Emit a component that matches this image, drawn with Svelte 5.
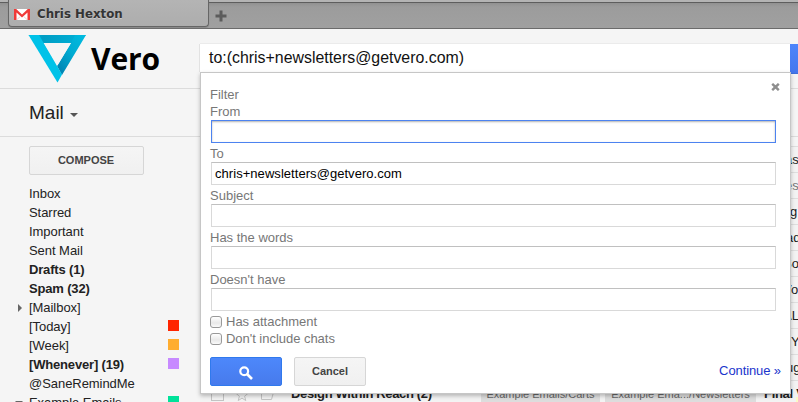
<script>
  const folders = [
    { name: 'Inbox' },
    { name: 'Starred' },
    { name: 'Important' },
    { name: 'Sent Mail' },
    { name: 'Drafts (1)', bold: true },
    { name: 'Spam (32)', bold: true },
    { name: '[Mailbox]', arrow: 'right' },
    { name: '[Today]', color: '#ff2500' },
    { name: '[Week]', color: '#ffad2f' },
    { name: '[Whenever] (19)', bold: true, color: '#c78aff' },
    { name: '@SaneRemindMe' },
    { name: 'Example Emails', arrow: 'down', color: '#00e29a' }
  ];
  const fields = [
    { label: 'From', value: '', focus: true },
    { label: 'To', value: 'chris+newsletters@getvero.com' },
    { label: 'Subject', value: '' },
    { label: 'Has the words', value: '' },
    { label: "Doesn't have", value: '' }
  ];
  const checks = ['Has attachment', "Don't include chats"];
  const snippets = [
    { text: 'as', x: 585 },
    { text: 'es', x: 585, read: true },
    { text: 'g', x: 590 },
    { text: 'ad', x: 586 },
    { text: 'So', x: 583 },
    { text: 'Vo', x: 583 },
    { text: 'AL', x: 583 },
    { text: 'Y', x: 591 },
    { text: 'ug', x: 586 }
  ];
</script>

<div class="window">
  <div class="tabbar">
    <div class="tab">
      <svg width="16" height="11" viewBox="0 0 16 11">
        <rect width="16" height="11" fill="#fff" />
        <path d="M0 11V0h2.200L8 5.600 13.800 0H16v11h-2.500V3.600L8 8.600 2.500 3.600V11z" fill="#f03a38" />
        <path d="M3 10.500 6.300 7.500M13 10.500 9.700 7.500" stroke="#e9b9b6" stroke-width=".7" />
      </svg>
      <span>Chris Hexton</span>
    </div>
    <svg class="plus" width="12" height="12" viewBox="0 0 12 12">
      <path d="M4.500.5h3v4h4v3h-4v4h-3v-4h-4v-3h4z" fill="#5c5c5c" />
    </svg>
  </div>

  <header>
    <svg class="logo" width="58" height="48" viewBox="0 0 58 48">
      <defs>
        <linearGradient id="topBand" x1="0" x2="1">
          <stop offset="0" stop-color="#00b9dc" />
          <stop offset=".25" stop-color="#009dc4" />
          <stop offset="1" stop-color="#00b2d8" />
        </linearGradient>
        <linearGradient id="rightBand" x1="1" y1="0" x2=".1" y2="1">
          <stop offset="0" stop-color="#00bce1" />
          <stop offset=".5" stop-color="#00abd2" />
          <stop offset="1" stop-color="#0080b0" />
        </linearGradient>
      </defs>
      <path d="M.5 0H58l-9 8H15z" fill="url(#topBand)" />
      <path d="M58 0 34 40l-5-9L43 8l4-8z" fill="url(#rightBand)" />
      <path d="M.5 0h10.500l23 39.500L29.500 47.500z" fill="#00c2e8" />
      <path d="M16 8h27L29.500 30.500z" fill="#f5f5f5" />
    </svg>
    <span class="brand">Vero</span>
  </header>

  <div class="toolbar"><span>Mail</span><i></i></div>

  <div class="body">
    <nav>
      <button class="compose">COMPOSE</button>
      <ul>
        {#each folders as f}
          <li class:bold={f.bold}>
            <span class="arrow {f.arrow ?? ''}"></span>
            <span class="name">{f.name}</span>
            {#if f.color}<b class="swatch" style="background:{f.color}"></b>{/if}
          </li>
        {/each}
      </ul>
    </nav>
    <div class="list">
      {#each snippets as s}
        <div class="row" class:read={s.read} style="padding-left:{s.x}px">{s.text}</div>
      {/each}
      <div class="row last">
        <span class="box"></span>
        <svg class="star" width="14" height="14" viewBox="0 0 14 14"><path d="M7 1l1.600 4.200 4.400.2-3.400 2.800 1.200 4.400L7 10.100l-3.800 2.500 1.200-4.400L1 5.400l4.400-.2z" fill="none" stroke="#c4c4c4" /></svg>
        <svg class="mark" width="15" height="12" viewBox="0 0 15 12"><path d="M.5.500h13l-3 11H.5z" fill="none" stroke="#c4c4c4" /></svg>
        <strong class="sender">Design Within Reach (2)</strong>
        <span class="chip c1">Example Emails/Carts</span>
        <span class="chip c2">Example Ema.../Newsletters</span>
        <strong class="subject">Final V</strong>
      </div>
    </div>
  </div>

  <div class="searchgo"></div>
  <div class="yellow"></div>

  <section class="search">
    <div class="query">to:(chris+newsletters@getvero.com)</div>
    <form class="panel">
      <svg class="close" width="9" height="8" viewBox="0 0 9 8"><path d="M1.200.8 7.800 7.200M7.800.8 1.200 7.200" stroke="#8e8e8e" stroke-width="2.400" /></svg>
      <div class="label">Filter</div>
      {#each fields as f}
        <div class="label">{f.label}</div>
        <div class="input" class:focus={f.focus}>{f.value}</div>
      {/each}
      {#each checks as c, i}
        <div class="check" class:second={i === 1}><i></i><span>{c}</span></div>
      {/each}
      <div class="actions">
        <div class="btn go">
          <svg width="14" height="14" viewBox="0 0 14 14"><circle cx="5.200" cy="5.200" r="3.900" fill="none" stroke="#fff" stroke-width="2.200" /><path d="M8 8l5 5" stroke="#fff" stroke-width="2.600" /></svg>
        </div>
        <div class="btn cancel">Cancel</div>
        <a href="#continue">Continue »</a>
      </div>
    </form>
  </section>
</div>

<style>
  .window {
    position: relative;
    width: 798px;
    height: 402px;
    overflow: hidden;
    background: #f5f5f5;
    font: 13px/19px "Liberation Sans", Arial, sans-serif;
    color: #222;
  }
  .window * { box-sizing: border-box; }
  .tabbar {
    display: flex;
    height: 29px;
    padding-left: 8px;
    background: linear-gradient(#b4b4b4 0 2px, #5e5e5e 2px 3px, #919191 3px, #9c9c9c 7px, #a0a0a0 28px);
    border-bottom: 1px solid #6b6b6b;
  }
  .tab {
    display: flex;
    align-items: center;
    width: 201px;
    height: 27px;
    padding: 2px 0 0 5px;
    border: solid #666;
    border-width: 0 1px 1px;
    border-radius: 0 0 4px 4px;
    background: linear-gradient(#b4b4b4, #adadad);
    box-shadow: 0 1px 1px #888;
    font: bold 11.8px/16px "DejaVu Sans", sans-serif;
    color: #343434;
    text-shadow: 0 1px 0 #c8c8c8;
  }
  .tab span { margin-left: 7px; white-space: nowrap; }
  .plus { margin: 10px 0 0 6px; }
  header {
    display: flex;
    height: 60px;
    padding: 6px 0 0 28px;
    border-bottom: 1px solid #dcdcdc;
  }
  .logo { flex: none; }
  .brand {
    margin: 4px 0 0 5px;
    font: bold 30px/40px "Open Sans", "Noto Sans", sans-serif;
    letter-spacing: -.1px;
    color: #000;
  }
  .toolbar {
    display: flex;
    align-items: center;
    height: 48px;
    padding-left: 29px;
    border-bottom: 1px solid #dcdcdc;
    font-size: 19px;
  }
  .toolbar i {
    margin: 4px 0 0 6px;
    border: solid transparent;
    border-width: 4px 4px 0;
    border-top-color: #555;
  }
  .body { display: flex; }
  nav { width: 200px; flex: none; padding-top: 9px; }
  .compose {
    display: block;
    width: 115px;
    height: 29px;
    margin: 0 0 9px 29px;
    padding: 0 1px 0 0;
    border: 1px solid #d6d6d6;
    border-radius: 2px;
    background: linear-gradient(#f5f5f5, #f0f0f0);
    font: bold 11px/27px "Liberation Sans", Arial, sans-serif;
    color: #444;
  }
  ul { margin: 0; padding: 0; list-style: none; }
  li { display: flex; align-items: center; height: 19px; white-space: nowrap; letter-spacing: -.05px; }
  li.bold { font-weight: bold; letter-spacing: -.17px; }
  .arrow { width: 29px; flex: none; }
  .arrow::before { content: ""; display: block; width: 0; margin-left: 18px; border: 0 solid transparent; }
  .arrow.right::before { border-width: 4px 0 4px 4px; border-left-color: #666; }
  .arrow.down::before { margin-left: 15px; border-width: 4px 4px 0; border-top-color: #666; }
  .name { width: 139px; }
  .swatch { width: 11px; height: 11px; margin-top: -2px; }
  .list { width: 598px; padding-top: 9px; }
  .row {
    height: 26px;
    border-top: 1px solid #dedede;
    font: 13px/26px "Liberation Sans", Arial, sans-serif;
    color: #222;
    white-space: nowrap;
    background: #f3f3f3;
  }
  .row.read { color: #777; }
  .last { display: flex; padding-left: 11px; }
  .box { width: 13px; height: 13px; margin-top: 7px; border: 1px solid #c4c4c4; flex: none; }
  .star { margin: 7px 0 0 11px; flex: none; }
  .mark { margin: 7px 0 0 12px; flex: none; }
  .sender { width: 190px; margin-left: 15px; flex: none; letter-spacing: -.35px; }
  .chip {
    height: 15px;
    margin: 6px 5px 0 0;
    flex: none;
    background: #ddd;
    font-size: 11px;
    line-height: 15px;
    color: #666;
    text-align: center;
  }
  .c1 { width: 119px; }
  .c2 { width: 151px; letter-spacing: .02px; }
  .subject { margin-left: 3px; letter-spacing: -.3px; }
  .searchgo { position: absolute; left: 790px; top: 44px; width: 8px; height: 30px; background: linear-gradient(#4d85fb, #4577ed); border-bottom: 1px solid #3f6fd8; }
  .yellow { position: absolute; left: 796px; top: 397px; width: 2px; height: 5px; background: #fbfbc4; }
  .search {
    position: absolute;
    left: 200px;
    top: 44px;
    width: 591px;
    height: 350px;
  }
  .query {
    width: 590px;
    height: 28px;
    padding-left: 9px;
    background: #fff;
    box-shadow: -1px 0 0 #e2e2e2, 0 -1px 0 #ebebeb;
    font-size: 15.900px;
    line-height: 28px;
    color: #111;
  }
  .panel {
    position: relative;
    height: 322px;
    margin: 0;
    padding: 13px 14px 0 9px;
    border: 1px solid #c6c6c6;
    background: #fff;
    box-shadow: 0 2px 4px rgba(0, 0, 0, .25);
  }
  .close { position: absolute; right: 10px; top: 10px; }
  .label { height: 17px; line-height: 17px; color: #777; }
  .input {
    height: 23px;
    margin: 0 0 2px 1px;
    padding-left: 3px;
    border: 1px solid #d9d9d9;
    border-top-color: #c0c0c0;
    line-height: 22px;
    letter-spacing: .05px;
    color: #000;
  }
  .input.focus { border-color: #4d83f0; box-shadow: inset 0 1px 2px rgba(0, 0, 0, .3); }
  .check { display: flex; align-items: center; height: 17px; color: #777; }
  .check i {
    width: 12px;
    height: 12px;
    margin: 1px 4px 0 0;
    border: 1px solid #999;
    border-radius: 3px;
    background: linear-gradient(#fff, #e9e9e9 60%, #fafafa);
  }
  .check.second span { letter-spacing: -.03px; }
  .actions { display: flex; padding-top: 10px; }
  .btn {
    width: 72px;
    height: 29px;
    border: 1px solid #d6d6d6;
    border-radius: 2px;
    background: linear-gradient(#f5f5f5, #f0f0f0);
    font-size: 11px;
    font-weight: bold;
    line-height: 27px;
    color: #444;
    text-align: center;
  }
  .go { display: flex; align-items: center; justify-content: center; border-color: #3079ed; background: linear-gradient(#4d88fb, #477aec); }
  .go svg { margin: 3px 0 0; }
  .cancel { margin-left: 12px; }
  a { margin: 4px -5px 0 auto; color: #1a35cc; text-decoration: none; white-space: nowrap; letter-spacing: -.1px; }
</style>
